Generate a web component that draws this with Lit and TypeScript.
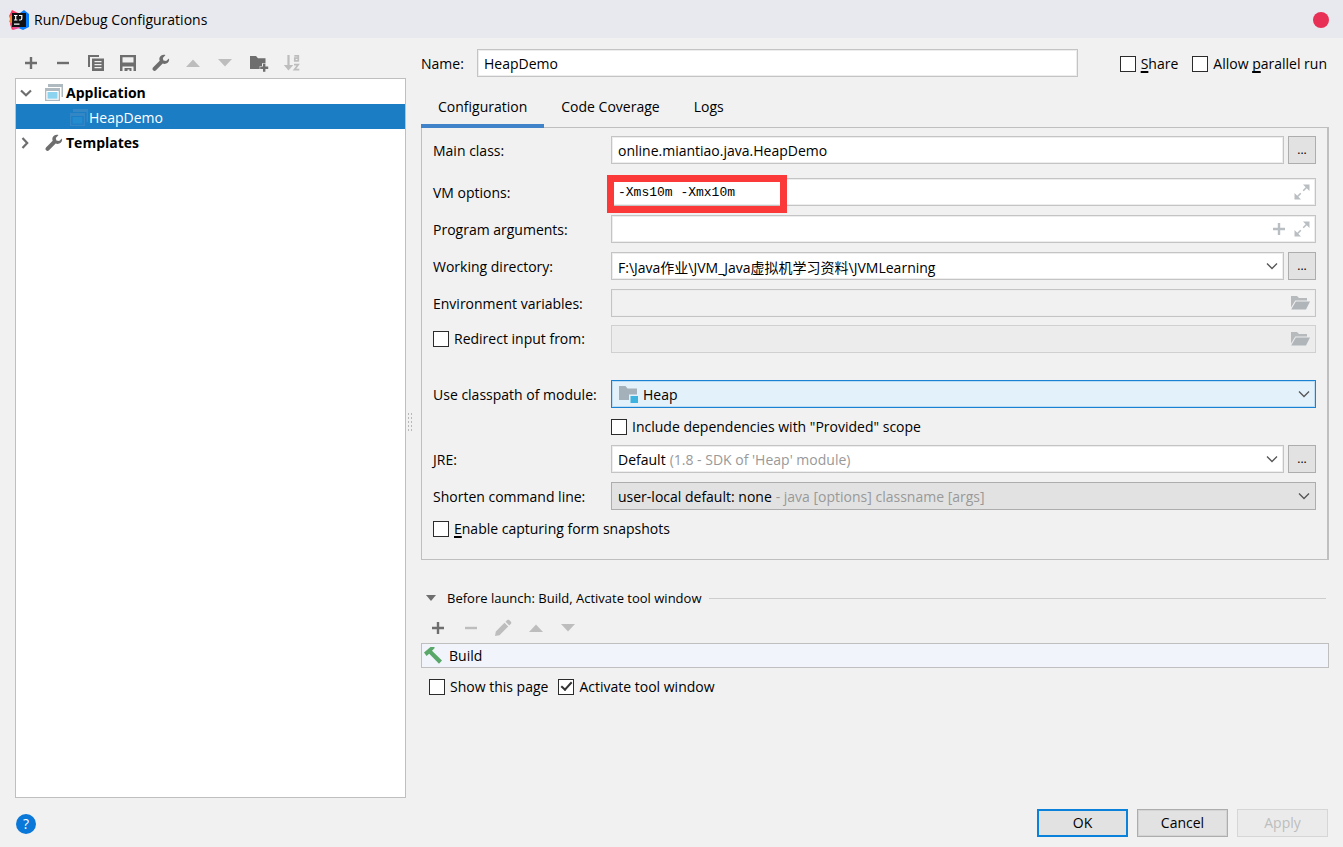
import { LitElement, html, css, svg, nothing, TemplateResult } from "lit";
import { customElement, property } from "lit/decorators.js";

const icon = (w: number, h: number, body: unknown) =>
  html`<svg width=${w} height=${h} viewBox="0 0 ${w} ${h}" aria-hidden="true">${body}</svg>`;

const DARK = "#6e6e6e";
const LIGHT = "#bdbdbd";

const plus = (c = DARK) => icon(18, 18, svg`<path d="M9 3v12M3 9h12" stroke=${c} stroke-width="2.4"/>`);
const minus = (c = DARK) => icon(18, 18, svg`<path d="M3 9h12" stroke=${c} stroke-width="2.4"/>`);
const up = () => icon(18, 18, svg`<path d="M2 13h14L9 5.500z" fill=${LIGHT}/>`);
const down = () => icon(18, 18, svg`<path d="M2 5h14L9 12.500z" fill=${LIGHT}/>`);
const copy = () => icon(18, 18, svg`
  <path d="M1 1h11v2H3v10H1z" fill=${DARK}/>
  <path fill-rule="evenodd" d="M5 4.500h12V17H5zM7.500 7v1.200h7V7zM7.500 10v1.200h7V10zM7.500 13v1.200h7V13z" fill=${DARK}/>`);
const save = () => icon(18, 18, svg`
  <path fill-rule="evenodd" d="M1 1h16v16h-2.500v-4.500h-11V17H1zM3.500 3.200v5.300h11V3.200z" fill=${DARK}/>
  <path d="M5.500 14h7v3h-2v-1.500h-2V17h-3z" fill=${DARK}/>`);
const wrench = () => icon(18, 18, svg`
  <path d="M17 4.400l-2.900 2.700-2.700-.5-.6-2.700L13.500 1C11 .2 8.400 1.300 7.600 3.600c-.4 1.200-.3 2.200.1 3.200L1 13.500c-.7.8-.7 2 .1 2.800.8.800 2.100.8 2.900 0l6.700-6.700c1.200.5 2.400.5 3.600-.1 2.200-1 3.300-3.100 2.700-5.100z" fill=${DARK}/>`);
const folderPlus = () => icon(20, 18, svg`
  <path d="M1 2h6l2 2.300h7.500v5H13v2.700h-2.300V15H1z" fill=${DARK}/>
  <path d="M15.200 9.700v8M11.200 13.700h8" stroke=${DARK} stroke-width="2.400"/>`);
const sortAz = () => icon(18, 18, svg`
  <path d="M5.500 1v12" stroke=${LIGHT} stroke-width="2.200"/><path d="M.8 11h9.400l-4.700 5.500z" fill=${LIGHT}/>
  <path d="M11.300 1.800h4v5.700M15.300 4.200h-3.500v2.600h3.500M11 10.700h4.200l-3.800 5h4.900" stroke=${LIGHT} stroke-width="1.700" fill="none"/>`);
const pencil = () => icon(18, 18, svg`
  <path d="M1 17l.8-4.500L10.500 3.800l3.700 3.700-8.700 8.700zM11.600 2.700l1.600-1.600c.6-.6 1.400-.6 2 0l1.700 1.700c.6.600.6 1.400 0 2l-1.600 1.600z" fill=${LIGHT}/>`);
const appWindow = (cls: string) => html`<svg class=${cls} width="18" height="18" viewBox="0 0 18 18" aria-hidden="true">
  <path class="frame" d="M3 0h15v13h-1.500V3H3z"/>
  <path class="frame" fill-rule="evenodd" d="M0 4h15v13H0zM1.300 7v8.700h12.400V7z"/>
  <path class="pane" d="M2.500 8h10v6.700h-10z"/></svg>`;
const chevron = (c = "#555") => icon(12, 12, svg`<path d="M1 3.500l5 5 5-5" fill="none" stroke=${c} stroke-width="1.300"/>`);
const expandIcon = () => icon(16, 16, svg`
  <path d="M9 .5h6.500V7zM.5 9v6.500H7z" fill="#b9bec2"/>
  <path d="M9.200 6.800l4-4M6.800 9.200l-4 4" stroke="#b9bec2" stroke-width="1.600"/>`);
const openFolder = () => icon(20, 16, svg`
  <path d="M1 1h6l2 2h8v2.500H5.300L1 12.500z" fill="#b6babd"/>
  <path d="M5.800 6.500H20L16 14.500H1.200z" fill="#b0b5b9"/>`);
const moduleIcon = () => icon(20, 18, svg`
  <path d="M1 1h6.500l2 2.500H19v6h-8V15H1z" fill="#a5b1ba"/>
  <path d="M12.500 11H20v7h-7.500z" fill="#3fb3e0"/>`);
const hammer = () => icon(20, 20, svg`
  <path d="M1 6.500L7.500 1h4v1.300L9 4.800l10 9.700-3 3.200L6.200 7.800 3.500 10z" fill="#59a869"/>`);
const logo = () => icon(20, 20, svg`
  <path d="M3 0l8 4-1 12-7 4-2-6 1-5-2-3z" fill="#fc3a64"/><path d="M0 6l4-1 1 9-5-2 1-3z" fill="#f9822d"/>
  <path d="M11 3l4-3 5 4v13l-6 3-7-3z" fill="#087cfa"/><path d="M4 17l6-1 1 2-7 2z" fill="#e8509c"/>
  <path d="M3 3h14v14H3z" fill="#111"/>
  <path d="M5 5.500h3.400M6.700 5.500v4.500M5 10h3.400M10 5.500h2.800v3.100q0 1.400-1.400 1.400h-1.500M5 14.200h5.500" stroke="#fff" stroke-width="1.200" fill="none"/>`);

const base = css`
  :host { box-sizing: border-box; }
  *, *::before, *::after { box-sizing: border-box; }
  button, input, select { font: inherit; color: inherit; margin: 0; }
  svg { display: block; flex: none; }
  .mnemonic { text-decoration: underline; text-decoration-thickness: 2px; text-underline-offset: 2px; text-decoration-skip-ink: none; }
`;

@customElement("tick-box")
class TickBox extends LitElement {
  @property() text = "";
  @property() mnemonic = "";
  @property({ type: Boolean }) checked = false;

  static styles = [base, css`
    :host { display: inline-flex; }
    .tick { display: flex; align-items: center; gap: 5px; white-space: nowrap; line-height: 20px; }
    .box { appearance: none; width: 16px; height: 16px; border: 1px solid #2b2b2b; background: #fff; display: grid; place-items: center; flex: none; }
    .box:checked::after { content: ""; width: 11px; height: 6px; border: solid #333; border-width: 0 0 2px 2px; transform: translateY(-2px) rotate(-48deg); }
  `];

  render() {
    const at = this.mnemonic ? this.text.indexOf(this.mnemonic) : -1;
    return html`<label class="tick">
      <input class="box" type="checkbox" .checked=${this.checked}>
      <span>${at < 0 ? this.text : html`${this.text.slice(0, at)}<span class="mnemonic">${this.mnemonic}</span>${this.text.slice(at + 1)}`}</span>
    </label>`;
  }
}

@customElement("app-root")
class AppRoot extends LitElement {
  static styles = [base, css`
    :host { display: flex; flex-direction: column; min-height: 100vh; background: #f1f1f1; color: #000;
      font: 14px/20px "Open Sans", "Noto Sans CJK SC", sans-serif; }
    .titlebar { height: 38px; background: #e8e9ef; display: flex; align-items: center; justify-content: space-between; padding: 1px 14px 0 9px; }
    .title { display: flex; align-items: center; gap: 5px; margin: 0; font-size: 14px; font-weight: 400; }
    .close { width: 16px; height: 16px; border: 0; border-radius: 50%; background: #e82f56; padding: 0; }

    .content { flex: 1; display: grid; grid-template-columns: 391px 15px minmax(0, 1fr); padding: 0 14px 0 15px; }
    .side { display: flex; flex-direction: column; }
    .tools { display: flex; justify-content: space-between; align-items: center; }
    .tool { border: 0; padding: 0; background: none; min-width: 18px; height: 18px; }
    .side-tools { width: 279px; height: 40px; margin-left: 7px; padding-top: 9px; }
    .tree { flex: 1; list-style: none; margin: 0; padding: 0; background: #fff; border: 1px solid #bfbfbf; }
    .node { display: flex; align-items: center; gap: 3px; height: 25px; padding: 2px 0 0 4px; }
    .node .arrow { width: 22px; }
    .group { font-weight: 700; }
    .selected { background: #1b7dc4; color: #fff; padding-left: 54px; gap: 1px; }
    .app .frame { fill: #aeb9c0; }
    .app .pane { fill: #8bd3ee; }
    .faint .frame { fill: #3387c5; }
    .faint .pane { fill: #258bcf; }
    .splitter { align-self: center; justify-self: start; margin: 8px 0 0 1px; width: 6px; height: 20px;
      background: radial-gradient(circle, #b8b8b8 1px, transparent 1px) 0 0 / 3px 4px; }

    .main { display: flex; flex-direction: column; }
    .name-row { display: flex; align-items: center; padding-top: 11px; }
    .name-label { width: 56px; flex: none; padding-top: 2px; }
    .name-row .field { flex: 0 1 601px; }
    .name-row .options { margin-left: auto; display: flex; gap: 14px; padding: 2px 2px 0 0; }
    .field { flex: 1; min-width: 0; height: 28px; display: flex; align-items: center; background: #fff; border: 1px solid #c4c4c4; padding: 0 5px 0 6px; box-shadow: inset 0 0 0 1px #ededed; position: relative; }
    .entry { flex: 1; min-width: 0; width: 0; height: 24px; border: 0; background: none; padding: 1px 0 0; outline: 0; }
    .mono { font-family: "Liberation Mono", monospace; font-size: 13px; }
    .trail { border: 0; background: none; padding: 0; display: flex; margin-left: 6px; }
    .plain { background: #f1f1f1; }
    .disabled { background: #ececec; border-color: #d0d0d0; }
    .button-like { background: #e2e2e2; border-color: #adadad; box-shadow: none; }
    .focused { background: #e3f1fa; border-color: #1a82d2; box-shadow: inset 0 0 0 1px #bcdcf3; }
    .field .lead { margin-right: 5px; display: flex; }
    .pick { appearance: none; border: 0; background: none; padding: 2px 0 0; outline: 0; height: 24px; }
    .hint { color: #999; white-space: pre; flex: 1; padding-top: 2px; }
    .more { flex: none; width: 28px; height: 28px; margin-left: 4px; padding: 0; border: 1px solid #adadad; background: #e2e2e2; font-size: 12px; }
    .mark { position: absolute; left: -5px; top: -4px; width: 180px; height: 38px; border: 7px solid #fb3939; pointer-events: none; }

    .tabs { display: flex; height: 50px; padding-top: 9px; }
    .tab { border: 0; border-bottom: 4px solid transparent; background: none; padding: 4px 17px 0; height: 42px; white-space: nowrap; }
    .tab.active { border-bottom-color: #4083c9; z-index: 1; }
    .panel { border: solid #bfbfbf; border-width: 1px 2px 1px 1px; padding: 8px 11px 12px; display: flex; flex-direction: column; }
    .row { display: flex; align-items: center; min-height: 28px; margin-bottom: 8px; }
    .row .caption { flex: none; width: 178px; white-space: nowrap; padding-top: 2px; }
    .row.spaced { margin-bottom: 14px; }
    .row.roomy { margin-bottom: 9px; }
    .row.section { margin-bottom: 27px; }
    .row.tight { min-height: 20px; margin-top: 1px; }
    .indent { margin-left: 178px; }

    .before { display: flex; align-items: center; gap: 8px; margin: 28px 3px 0 4px; }
    .fold { border: 0; background: none; padding: 0; width: 12px; margin-right: 2px; }
    .before h2 { margin: 0; font-size: 13px; font-weight: 400; }
    .rule { flex: 1; height: 1px; background: #cdcdcd; }
    .task-tools { width: 148px; margin: 11px 0 6px 8px; }
    .tasks { list-style: none; margin: 0; padding: 0; border: 1px solid #bfbfbf; background: #f1f5fb; }
    .task { display: flex; align-items: center; gap: 6px; height: 23px; padding: 1px 1px 0; }
    .checks { display: flex; gap: 10px; margin: 9px 8px 0; }

    .footer { height: 49px; display: flex; align-items: center; justify-content: space-between; padding: 0 15px 0 16px; }
    .help { width: 20px; height: 20px; border: 0; border-radius: 50%; background: #0a78d8; color: #fff; padding: 0; line-height: 20px; margin-top: 3px; }
    .actions { display: flex; gap: 9px; }
    .action { width: 91px; height: 28px; border: 1px solid #adadad; background: #e2e2e2; padding: 0; box-shadow: inset 0 0 0 1px #d4d4d4; }
    .primary { border: 2px solid #0a82dc; box-shadow: none; }
    .action:disabled { color: #bdbdbd; background: #ebebeb; border-color: #d6d6d6; box-shadow: none; }
  `];

  private tool(label: string, glyph: TemplateResult) {
    return html`<button class="tool" type="button" aria-label=${label}>${glyph}</button>`;
  }

  private more(label: string) {
    return html`<button class="more" type="button" aria-label=${label}>...</button>`;
  }

  private trail(label: string, glyph: TemplateResult) {
    return html`<button class="trail" type="button" aria-label=${label}>${glyph}</button>`;
  }

  private row(id: string, label: string, field: TemplateResult, cls = "", extra: unknown = nothing) {
    return html`<div class="row ${cls}"><label class="caption" for=${id}>${label}</label>${field}${extra}</div>`;
  }

  render() {
    return html`
      <header class="titlebar">
        <h1 class="title">${logo()}Run/Debug Configurations</h1>
        <button class="close" type="button" aria-label="Close"></button>
      </header>
      <div class="content">
        <aside class="side">
          <div class="tools side-tools">
            ${this.tool("Add", plus())}${this.tool("Remove", minus())}${this.tool("Copy", copy())}
            ${this.tool("Save", save())}${this.tool("Edit templates", wrench())}${this.tool("Move up", up())}
            ${this.tool("Move down", down())}${this.tool("New folder", folderPlus())}${this.tool("Sort", sortAz())}
          </div>
          <ul class="tree">
            <li class="node group"><span class="arrow">${icon(12, 12, svg`<path d="M1 3.500l5 4.700 5-4.700" fill="none" stroke=${DARK} stroke-width="2.200"/>`)}</span>${appWindow("app")}Application</li>
            <li class="node selected">${appWindow("faint")}HeapDemo</li>
            <li class="node group"><span class="arrow">${icon(12, 12, svg`<path d="M2.500 1l4.700 5-4.700 5" fill="none" stroke=${DARK} stroke-width="2.200"/>`)}</span>${wrench()}Templates</li>
          </ul>
        </aside>
        <div class="splitter"></div>
        <main class="main">
          <div class="name-row">
            <label class="name-label" for="name">Name:</label>
            <div class="field"><input class="entry" id="name" type="text" .value=${"HeapDemo"}></div>
            <div class="options">
              <tick-box text="Share" mnemonic="S"></tick-box>
              <tick-box text="Allow parallel run" mnemonic="p"></tick-box>
            </div>
          </div>
          <nav class="tabs">
            <button class="tab active" type="button">Configuration</button>
            <button class="tab" type="button">Code Coverage</button>
            <button class="tab" type="button">Logs</button>
          </nav>
          <section class="panel">
            ${this.row("main-class", "Main class:", html`<div class="field"><input class="entry" id="main-class" type="text" .value=${"online.miantiao.java.HeapDemo"}></div>`, "spaced", this.more("Browse main class"))}
            ${this.row("vm", "VM options:", html`<div class="field"><input class="entry mono" id="vm" type="text" .value=${"-Xms10m -Xmx10m"}>${this.trail("Expand", expandIcon())}<span class="mark"></span></div>`, "roomy")}
            ${this.row("args", "Program arguments:", html`<div class="field"><input class="entry" id="args" type="text">${this.trail("Insert macro", plus("#b9bec2"))}${this.trail("Expand", expandIcon())}</div>`, "roomy")}
            ${this.row("dir", "Working directory:", html`<div class="field"><input class="entry" id="dir" type="text" .value=${"F:\\Java作业\\JVM_Java虚拟机学习资料\\JVMLearning"}>${this.trail("Recent directories", chevron())}</div>`, "roomy", this.more("Browse directory"))}
            ${this.row("env", "Environment variables:", html`<div class="field plain"><input class="entry" id="env" type="text">${this.trail("Edit variables", openFolder())}</div>`)}
            <div class="row section">
              <span class="caption"><tick-box text="Redirect input from:"></tick-box></span>
              <div class="field disabled"><input class="entry" type="text" aria-label="Redirect input from" disabled>${this.trail("Browse file", openFolder())}</div>
            </div>
            ${this.row("module", "Use classpath of module:", html`<div class="field focused"><span class="lead">${moduleIcon()}</span><select class="pick" id="module"><option>Heap</option></select><span class="hint"></span>${chevron()}</div>`)}
            <div class="row tight indent"><tick-box text='Include dependencies with "Provided" scope'></tick-box></div>
            ${this.row("jre", "JRE:", html`<div class="field"><select class="pick" id="jre"><option>Default</option></select><span class="hint"> (1.8 - SDK of 'Heap' module)</span>${chevron()}</div>`, "roomy", this.more("Browse JRE"))}
            ${this.row("shorten", "Shorten command line:", html`<div class="field button-like"><select class="pick" id="shorten"><option>user-local default: none</option></select><span class="hint"> - java [options] classname [args]</span>${chevron()}</div>`)}
            <div class="row tight"><tick-box text="Enable capturing form snapshots" mnemonic="E"></tick-box></div>
          </section>
          <section>
            <div class="before">
              <button class="fold" type="button" aria-label="Collapse">${icon(12, 8, svg`<path d="M1 1h10L6 7z" fill=${DARK}/>`)}</button>
              <h2>Before launch: Build, Activate tool window</h2>
              <span class="rule"></span>
            </div>
            <div class="tools task-tools">
              ${this.tool("Add task", plus())}${this.tool("Remove task", minus(LIGHT))}${this.tool("Edit task", pencil())}
              ${this.tool("Task up", up())}${this.tool("Task down", down())}
            </div>
            <ul class="tasks"><li class="task">${hammer()}Build</li></ul>
            <div class="checks">
              <tick-box text="Show this page"></tick-box>
              <tick-box text="Activate tool window" checked></tick-box>
            </div>
          </section>
        </main>
      </div>
      <footer class="footer">
        <button class="help" type="button" aria-label="Help">?</button>
        <div class="actions">
          <button class="action primary" type="button">OK</button>
          <button class="action" type="button">Cancel</button>
          <button class="action" type="button" disabled>Apply</button>
        </div>
      </footer>
    `;
  }
}
